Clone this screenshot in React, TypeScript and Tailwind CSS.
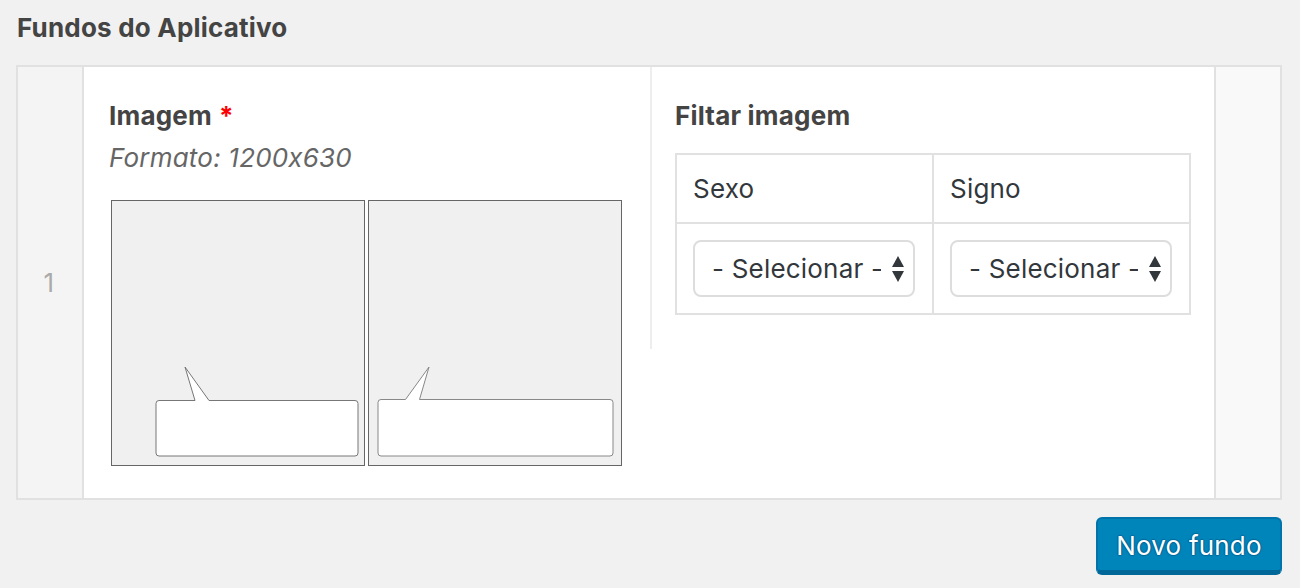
import { ReactNode } from "react";

const font = { fontFamily: "Inter, 'Noto Sans', sans-serif", fontFeatureSettings: "'calt' 0" };

/** Placeholder thumbnail with a speech bubble drawn in */
const Thumb = ({ flip = false }: { flip?: boolean }) => (
  <svg width="254" height="266" viewBox="0 0 254 266" className="block">
    <rect x="0.5" y="0.5" width="253" height="265" fill="#f0f0f0" stroke="#666" />
    {flip ? (
      <path
        d="M13 199.5 H37.5 L61 167 L51.5 199.5 H242 a3 3 0 0 1 3 3 V253 a3 3 0 0 1 -3 3 H13 a3 3 0 0 1 -3 -3 V202.5 a3 3 0 0 1 3 -3 Z"
        fill="#fff"
        stroke="#888"
      />
    ) : (
      <path
        d="M48 200.5 H84 L74 167 L98 200.5 H244 a3 3 0 0 1 3 3 V253 a3 3 0 0 1 -3 3 H48 a3 3 0 0 1 -3 -3 V203.5 a3 3 0 0 1 3 -3 Z"
        fill="#fff"
        stroke="#777"
      />
    )}
  </svg>
);

const SelectBox = () => (
  <div className="flex h-[57px] w-[222px] items-center rounded-[8px] border-2 border-[#dddddd] bg-white pl-[17px] pr-[8px] text-[26px] tracking-[0.2px] text-[#32373c]">
    <span className="block w-[169px] overflow-hidden whitespace-nowrap">- Selecionar -</span>
    <svg width="14" height="28" viewBox="0 0 14 28" className="ml-auto">
      <path d="M7 1 L13 12 H1 Z" fill="#32373c" />
      <path d="M1 16 H13 L7 27 Z" fill="#32373c" />
    </svg>
  </div>
);

const Cell = ({ children, className = "" }: { children: ReactNode; className?: string }) => (
  <div className={`flex-1 px-4 ${className}`}>{children}</div>
);

export default function App() {
  return (
    <div className="min-h-screen bg-[#f1f1f1] pb-4 tracking-[0.2px]" style={font}>
      <h2 className="pl-[17px] pt-[12px] text-[26px] font-bold leading-[32px] text-[#444]">Fundos do Aplicativo</h2>

      <div className="ml-4 mt-[21px] flex h-[435px] w-[1266px] border-2 border-[#e1e1e1] bg-white">
        {/* row number */}
        <div className="flex w-[66px] items-center justify-center border-r-2 border-[#e1e1e1] bg-[#f4f4f4] pr-[2px] text-[26px] text-[#aaa]">
          1
        </div>

        {/* image field */}
        <div className="w-[566px] px-[25px] pt-[32px]">
          <div className="flex items-center gap-[7px] text-[26px] font-bold leading-[34px] text-[#444]">
            Imagem <span className="text-[#f00]">*</span>
          </div>
          <div className="mt-[8px] text-[26px] italic leading-[34px] text-[#666]">Formato: 1200x630</div>
          <div className="ml-[2px] mt-[25px] flex gap-[3px]">
            <Thumb />
            <Thumb flip />
          </div>
        </div>

        {/* filter field */}
        <div className="h-[282px] w-[564px] border-l-2 border-[#eeeeee] px-[23px] pt-[32px]">
          <div className="text-[26px] font-bold leading-[34px] text-[#444]">Filtar imagem</div>
          <div className="mt-[20px] border-2 border-[#e1e1e1] text-[26px] text-[#32373c]">
            <div className="flex h-[69px] items-center border-b-2 border-[#e1e1e1]">
              <Cell className="border-r-2 border-[#e1e1e1] leading-[71px]">Sexo</Cell>
              <Cell className="leading-[71px]">Signo</Cell>
            </div>
            <div className="flex h-[89px]">
              <Cell className="flex items-center border-r-2 border-[#e1e1e1]">
                <SelectBox />
              </Cell>
              <Cell className="flex items-center">
                <SelectBox />
              </Cell>
            </div>
          </div>
        </div>

        {/* actions column */}
        <div className="flex-1 border-l-2 border-[#e1e1e1] bg-[#f9f9f9]" />
      </div>

      <div className="mt-[17px] flex w-[1282px] justify-end">
        <button
          className="h-[58px] w-[186px] rounded-[6px] border-2 border-b-[5px] border-[#0073aa] border-b-[#006799] bg-[#0085ba] pt-[2px] text-[26px] text-white"
          style={{ textShadow: "0 -1px 1px #006799, 1px 0 1px #006799, 0 1px 1px #006799, -1px 0 1px #006799" }}
        >
          Novo fundo
        </button>
      </div>
    </div>
  );
}
